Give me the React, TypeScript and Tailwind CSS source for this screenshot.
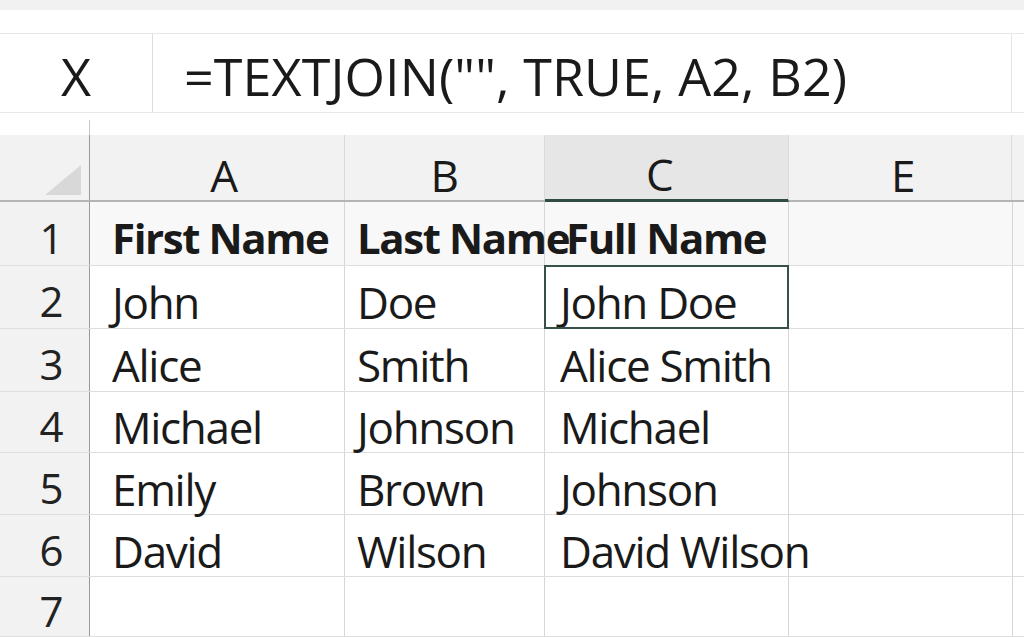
import React from 'react';

const cols = [
  { id: 'A', pad: 'pl-[22px]', head: 'pl-[14px]' },
  { id: 'B', pad: 'pl-[12px]', head: '' },
  { id: 'C', pad: 'pl-[15px]', head: 'pr-[14px]' },
  { id: 'E', pad: 'pl-[15px]', head: 'pl-[6px]' },
];

const rows: { n: number; h: string; cells: string[]; bold?: boolean }[] = [
  { n: 1, h: 'h-[64px]', cells: ['First Name', 'Last Name', 'Full Name', ''], bold: true },
  { n: 2, h: 'h-[63px]', cells: ['John', 'Doe', 'John Doe', ''] },
  { n: 3, h: 'h-[63px]', cells: ['Alice', 'Smith', 'Alice Smith', ''] },
  { n: 4, h: 'h-[61px]', cells: ['Michael', 'Johnson', 'Michael', ''] },
  { n: 5, h: 'h-[62px]', cells: ['Emily', 'Brown', 'Johnson', ''] },
  { n: 6, h: 'h-[62px]', cells: ['David', 'Wilson', 'David Wilson', ''] },
  { n: 7, h: 'h-[60px]', cells: ['', '', '', ''] },
];

const widths = ['w-[255px]', 'w-[200px]', 'w-[244px]', 'w-[223px]'];

export default function App() {
  return (
    <div className="w-[1024px] h-[637px] overflow-hidden bg-white text-[#1a1a1a] font-['Open_Sans',sans-serif]">
      {/* top strip */}
      <div className="h-[10px] bg-[#f1f1f1]" />
      <div className="h-[23px]" />

      {/* formula bar */}
      <div className="flex h-[80px] border-y border-[#e8e8e8]">
        <div className="w-[153px] flex items-center justify-center pt-[6px] border-r border-[#dcdcdc] text-[52px] leading-none">
          X
        </div>
        <div className="w-[859px] flex items-center pl-[31px] pt-[6px] border-r border-[#e4e4e4] text-[52px] leading-none tracking-[0.1px] whitespace-nowrap">
          =TEXTJOIN("", TRUE, A2, B2)
        </div>
      </div>

      <div className="flex h-[22px]">
        <div className="w-[90px] h-full flex justify-end">
          <div className="mt-[7px] w-px bg-[#c8c8c8]" />
        </div>
      </div>

      {/* column headers */}
      <div className="flex h-[67px] bg-[#f2f2f2] border-b-2 border-[#b4b4b4]">
        <div className="w-[90px] relative border-r border-[#9a9a9a]">
          <div className="absolute left-[45px] top-[30px] w-0 h-0 border-l-[36px] border-l-transparent border-b-[30px] border-b-[#d8d8d8]" />
        </div>
        {cols.map((c, i) => (
          <div
            key={c.id}
            className={`${widths[i]} flex items-center justify-center ${c.head} pt-[14px] text-[44px] leading-none tracking-[-0.5px] border-r border-[#dadada] ${
              c.id === 'C' ? 'bg-[#e6e6e6] border-b-[3px] border-b-[#2f4b43] -mb-[2px]' : ''
            }`}
          >
            {c.id}
          </div>
        ))}
        <div className="flex-1" />
      </div>

      {/* rows */}
      {rows.map((r) => (
        <div key={r.n} className={`flex ${r.h} border-b border-[#dedede] ${r.bold ? 'bg-[#f8f8f8]' : ''}`}>
          <div className="w-[90px] bg-[#f2f2f2] border-r border-[#9a9a9a] flex items-center justify-center pl-[14px] pt-[8px] text-[42px] leading-none text-[#222]">
            {r.n}
          </div>
          {r.cells.map((t, i) => {
            const selected = r.n === 2 && i === 2;
            const pad = r.bold && i === 2 ? 'pl-[21px]' : cols[i].pad;
            return (
              <div
                key={i}
                className={`${widths[i]} relative flex items-center ${pad} whitespace-nowrap leading-none ${
                  r.bold ? 'font-bold text-[42px] tracking-[-1.4px] pt-[9px]' : 'text-[44px] tracking-[-1.3px] pt-[10px]'
                } ${i === 3 ? '' : 'border-r border-[#d6d6d6]'}`}
              >
                {selected && (
                  <div className="absolute -left-px -top-px -right-px -bottom-px border-2 border-[#38504a] pointer-events-none" />
                )}
                <span>{t}</span>
              </div>
            );
          })}
          <div className="flex-1 border-l border-[#d6d6d6]" />
        </div>
      ))}
    </div>
  );
}
